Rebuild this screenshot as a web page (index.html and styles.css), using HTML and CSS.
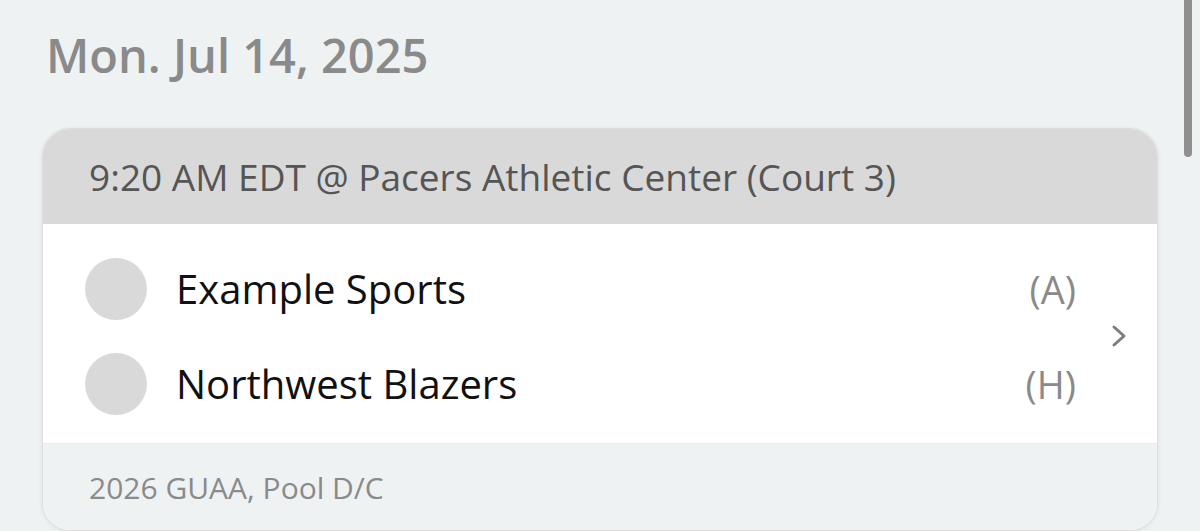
FILE: index.html
```html
<!DOCTYPE html>
<html lang="en">
<head>
<meta charset="UTF-8">
<meta name="viewport" content="width=device-width, initial-scale=1.0">
<title>Schedule</title>
<link rel="stylesheet" href="styles.css">
</head>
<body>
<div class="scrollbar"></div>
<div class="page">
<h1 class="day">Mon. Jul 14, 2025</h1>
<div class="game-card">
<div class="game-head">9:20 AM EDT @ Pacers Athletic Center (Court 3)</div>
<div class="game-body">
<div class="teams">
<div class="team">
<div class="logo"></div>
<div class="team-name">Example Sports</div>
<div class="side">(A)</div>
</div>
<div class="team">
<div class="logo"></div>
<div class="team-name">Northwest Blazers</div>
<div class="side">(H)</div>
</div>
</div>
<svg class="chevron" width="16" height="24" viewBox="0 0 16 24">
<path d="M3 3 L13 12 L3 21" fill="none" stroke="#7d7d7d" stroke-width="3" stroke-linecap="round" stroke-linejoin="round"/>
</svg>
</div>
<div class="game-foot">2026 GUAA, Pool D/C</div>
</div>
</div>
</body>
</html>
```

FILE: styles.css
```css
body {
font-family: 'Open Sans', 'Lato', sans-serif;
background-color: #eff2f3;
margin: 0;
height: 531px;
overflow: hidden;
}

.scrollbar {
position: absolute;
top: -6px;
right: 8px;
width: 8px;
height: 163px;
border-radius: 4px;
background-color: #8f8f8f;
}

.page {
padding: 0 42px;
}

.day {
margin: 0;
padding: 27px 0 0 4px;
height: 128px;
box-sizing: border-box;
font-size: 47px;
line-height: 56px;
font-weight: 600;
color: #8a8a8a;
}

.game-card {
background-color: #fff;
border: 1px solid #dcdcdc;
border-radius: 28px;
overflow: hidden;
box-shadow: 0 1px 4px rgba(0, 0, 0, 0.08);
}

.game-head {
height: 95px;
display: flex;
align-items: center;
padding-left: 46px;
background-color: #d9d9d9;
font-size: 37px;
color: #555;
}

.game-body {
display: flex;
align-items: center;
padding: 17px 30px 12px 42px;
}

.teams {
flex: 1;
}

.team {
height: 95px;
display: flex;
align-items: center;
}

.logo {
width: 62px;
height: 62px;
border-radius: 50%;
background-color: #d9d9d9;
margin-right: 29px;
}

.team-name {
flex: 1;
font-size: 40px;
color: #111;
}

.side {
font-size: 38px;
color: #8a8a8a;
margin-right: 35px;
}

.chevron {
display: block;
}

.game-foot {
height: 86px;
display: flex;
align-items: center;
padding-left: 46px;
background-color: #eff2f3;
border-top: 1px solid #e9ecee;
font-size: 30px;
color: #8a8a8a;
}
```
